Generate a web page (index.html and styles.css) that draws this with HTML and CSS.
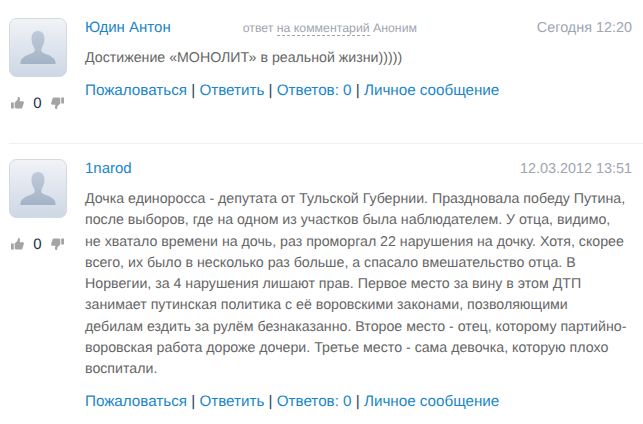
FILE: index.html
```html
<!DOCTYPE html>
<html lang="ru">
<head>
<meta charset="utf-8">
<title>Комментарии</title>
<link rel="stylesheet" href="styles.css">
</head>
<body>
<svg class="defs" width="0" height="0" aria-hidden="true">
  <defs>
    <linearGradient id="ava" x1="0" y1="0" x2="0" y2="1">
      <stop offset="0" stop-color="#f1f3f7"/>
      <stop offset="1" stop-color="#cdd7e5"/>
    </linearGradient>
    <linearGradient id="man" x1="0" y1="0" x2="0" y2="1">
      <stop offset="0" stop-color="#c0cbda"/>
      <stop offset="1" stop-color="#a3b3c6"/>
    </linearGradient>
    <symbol id="avatar" viewBox="0 0 58 59">
      <rect x="0.5" y="0.5" width="57" height="58" rx="7" fill="url(#ava)" stroke="#d5d8dd"/>
      <path d="M29 13c-5 0-6.500 4-6.500 8 0 3.500 1.500 7 2.800 9 .7 1.200.6 3.300-.6 4.200-2.700 2-11 3.600-12.700 8-.5 1.300-.6 2.800-.6 3.800h35.200c0-1-.1-2.500-.6-3.800-1.700-4.400-10-6-12.700-8-1.200-.9-1.300-3-.6-4.200 1.300-2 2.800-5.500 2.800-9 0-4-1.500-8-6.500-8z" fill="url(#man)"/>
    </symbol>
    <symbol id="up" viewBox="0 0 14 14">
      <path d="M0 6.500h3V13H0zM4 6.500 7 3.500 7.500 0.500c1.500-.3 2.500.8 2.200 2.300L9.200 5.200h3.400c1 0 1.500 1 1.200 1.800l-1.600 5c-.3.700-.8 1-1.500 1H6c-.8 0-1.300-.3-2-.8z" fill="#a4a4a4"/>
    </symbol>
    <symbol id="down" viewBox="0 0 14 14">
      <path d="M14 7.500h-3V1h3zM10 7.500 7 10.500 6.500 13.500c-1.500.3-2.500-.8-2.200-2.300l.5-2.400H1.400c-1 0-1.500-1-1.200-1.800l1.600-5C2.100 1.300 2.600 1 3.300 1H8c.8 0 1.300.3 2 .8z" fill="#a4a4a4"/>
    </symbol>
  </defs>
</svg>
<main class="comments">
  <article class="comment first">
    <aside class="side">
      <svg class="avatar"><use href="#avatar"/></svg>
      <div class="rating">
        <svg class="thumb"><use href="#up"/></svg>
        <span class="score">0</span>
        <svg class="thumb"><use href="#down"/></svg>
      </div>
    </aside>
    <div class="body">
      <header class="head">
        <a class="author" href="#">Юдин Антон</a>
        <span class="reply">ответ <span class="dashed">на комментарий</span> Аноним</span>
        <time class="date">Сегодня 12:20</time>
      </header>
      <p class="text">Достижение «МОНОЛИТ» в реальной жизни)))))</p>
      <nav class="links"><a href="#">Пожаловаться</a> <i>|</i> <a href="#">Ответить</a> <i>|</i> <a href="#">Ответов: 0</a> <i>|</i> <a href="#">Личное сообщение</a></nav>
    </div>
  </article>
  <article class="comment second">
    <aside class="side">
      <svg class="avatar"><use href="#avatar"/></svg>
      <div class="rating">
        <svg class="thumb"><use href="#up"/></svg>
        <span class="score">0</span>
        <svg class="thumb"><use href="#down"/></svg>
      </div>
    </aside>
    <div class="body">
      <header class="head">
        <a class="author" href="#">1narod</a>
        <time class="date">12.03.2012 13:51</time>
      </header>
      <p class="text">Дочка единоросса - депутата от Тульской Губернии. Праздновала победу Путина,<br>после выборов, где на одном из участков была наблюдателем. У отца, видимо,<br>не хватало времени на дочь, раз проморгал 22 нарушения на дочку. Хотя, скорее<br>всего, их было в несколько раз больше, а спасало вмешательство отца. В<br>Норвегии, за 4 нарушения лишают прав. Первое место за вину в этом ДТП<br>занимает путинская политика с её воровскими законами, позволяющими<br>дебилам ездить за рулём безнаказанно. Второе место - отец, которому партийно-<br>воровская работа дороже дочери. Третье место - сама девочка, которую плохо<br>воспитали.</p>
      <nav class="links"><a href="#">Пожаловаться</a> <i>|</i> <a href="#">Ответить</a> <i>|</i> <a href="#">Ответов: 0</a> <i>|</i> <a href="#">Личное сообщение</a></nav>
    </div>
  </article>
</main>
</body>
</html>
```

FILE: styles.css
```css
html, body {
  margin: 0;
  padding: 0;
  background: #fff;
}
body {
  width: 643px;
  height: 424px;
  overflow: hidden;
  font-family: "Liberation Sans", Arial, sans-serif;
  text-rendering: geometricPrecision;
}
.defs {
  position: absolute;
}
.comment {
  display: flex;
  margin-left: 9px;
}
.first {
  padding-top: 18px;
  height: 144px;
  box-sizing: border-box;
  border-bottom: 1px solid #f0f0f0;
}
.second {
  padding-top: 15px;
}
.side {
  width: 58px;
  margin-right: 18px;
  flex: none;
}
.avatar {
  display: block;
  width: 58px;
  height: 59px;
}
.rating {
  display: flex;
  align-items: center;
  margin-top: 16px;
  padding-left: 2px;
  height: 20px;
}
.thumb {
  width: 13px;
  height: 14px;
}
.score {
  width: 27px;
  text-align: center;
  font-size: 15px;
  color: #1d2d44;
}
.body {
  flex: 1;
  min-width: 0;
}
.head {
  display: flex;
  align-items: baseline;
  height: 20px;
  padding-top: 1px;
}
.author {
  font-size: 15px;
  color: #1a86c8;
  text-decoration: none;
}
.reply {
  margin-left: 72px;
  font-size: 12.3px;
  color: #a0a5b0;
}
.dashed {
  border-bottom: 1px dashed #a0a5b0;
}
.date {
  margin-left: auto;
  padding-right: 11px;
  font-size: 14.4px;
  color: #a0a5b0;
}
.text {
  margin: 9px 0 0;
  font-size: 14.2px;
  line-height: 21.25px;
  color: #666;
}
.links {
  margin-top: 12px;
  font-size: 15.2px;
  line-height: 20px;
  color: #1a86c8;
}
.links a {
  color: #1a86c8;
  text-decoration: none;
}
.links i {
  font-style: normal;
  color: #1d4060;
}
```
